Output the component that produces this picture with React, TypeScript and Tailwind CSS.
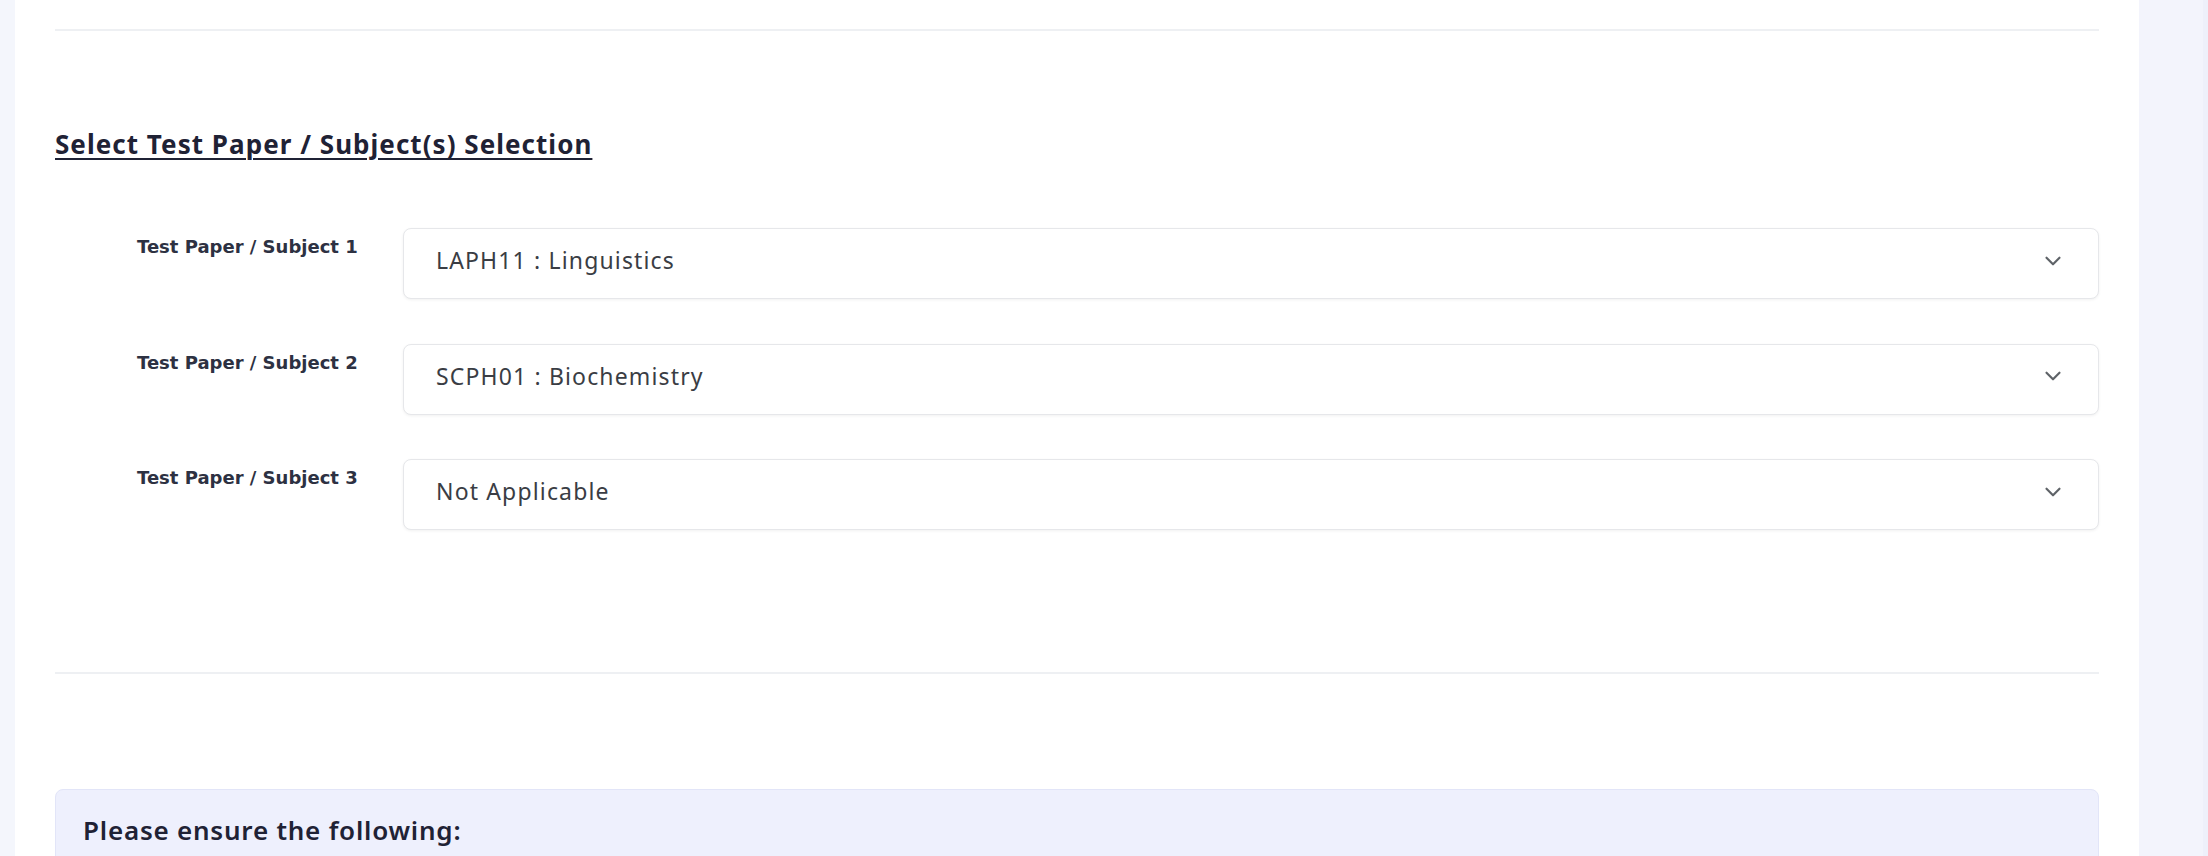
import { ChevronDown } from 'lucide-react';

const subjects = [
  { label: 'Test Paper / Subject 1', value: 'LAPH11 : Linguistics' },
  { label: 'Test Paper / Subject 2', value: 'SCPH01 : Biochemistry' },
  { label: 'Test Paper / Subject 3', value: 'Not Applicable' },
];

const SubjectRow = ({ label, value }: { label: string; value: string }) => {
  return (
    <div className="flex items-start">
      <div className="w-[348px] shrink-0 pl-[82px] pt-[7px] font-['DejaVu_Sans',sans-serif] text-[18px] leading-6 font-bold text-[#2d3142]">
        {label}
      </div>
      <div className="flex h-[71px] flex-1 items-center justify-between rounded-lg border border-[#e6e7ea] bg-white pb-[6px] pl-8 pr-8 shadow-[0_1px_3px_rgba(0,0,0,0.06)]">
        <span className="text-[23px] tracking-[0.05em] text-[#3a3d44]">{value}</span>
        <ChevronDown size={26} strokeWidth={2} className="text-[#5f6368]" />
      </div>
    </div>
  );
};

export default function App() {
  return (
    <div className="flex h-[856px] w-full overflow-hidden bg-white font-['Noto_Sans',sans-serif]">
      <div className="w-[15px] shrink-0 bg-[#f4f6fc]"></div>

      <main className="flex-1 px-10 pt-[29px]">
        <div className="h-[2px] bg-[#eef0f3]"></div>

        <h2 className="mt-[97px] text-[26px] leading-8 font-bold tracking-[0.04em] text-[#1f2235] underline underline-offset-4 decoration-2">
          Select Test Paper / Subject(s) Selection
        </h2>

        <div className="mt-[68px] flex flex-col gap-[44.5px]">
          {subjects.map((s) => (
            <SubjectRow key={s.label} label={s.label} value={s.value} />
          ))}
        </div>

        <div className="mt-[142px] h-[2px] bg-[#eef0f3]"></div>

        <div className="mt-[115px] rounded-lg border border-[#e2e5f8] bg-[#eef0fd] px-[27px] pt-[24px] pb-6">
          <p className="text-[26px] leading-8 font-semibold tracking-[0.03em] text-[#1f2235]">Please ensure the following:</p>
        </div>
      </main>

      <div className="w-[69px] shrink-0 border-r-[5px] border-[#eef0fa] bg-[#f3f4fc]"></div>
    </div>
  );
}
